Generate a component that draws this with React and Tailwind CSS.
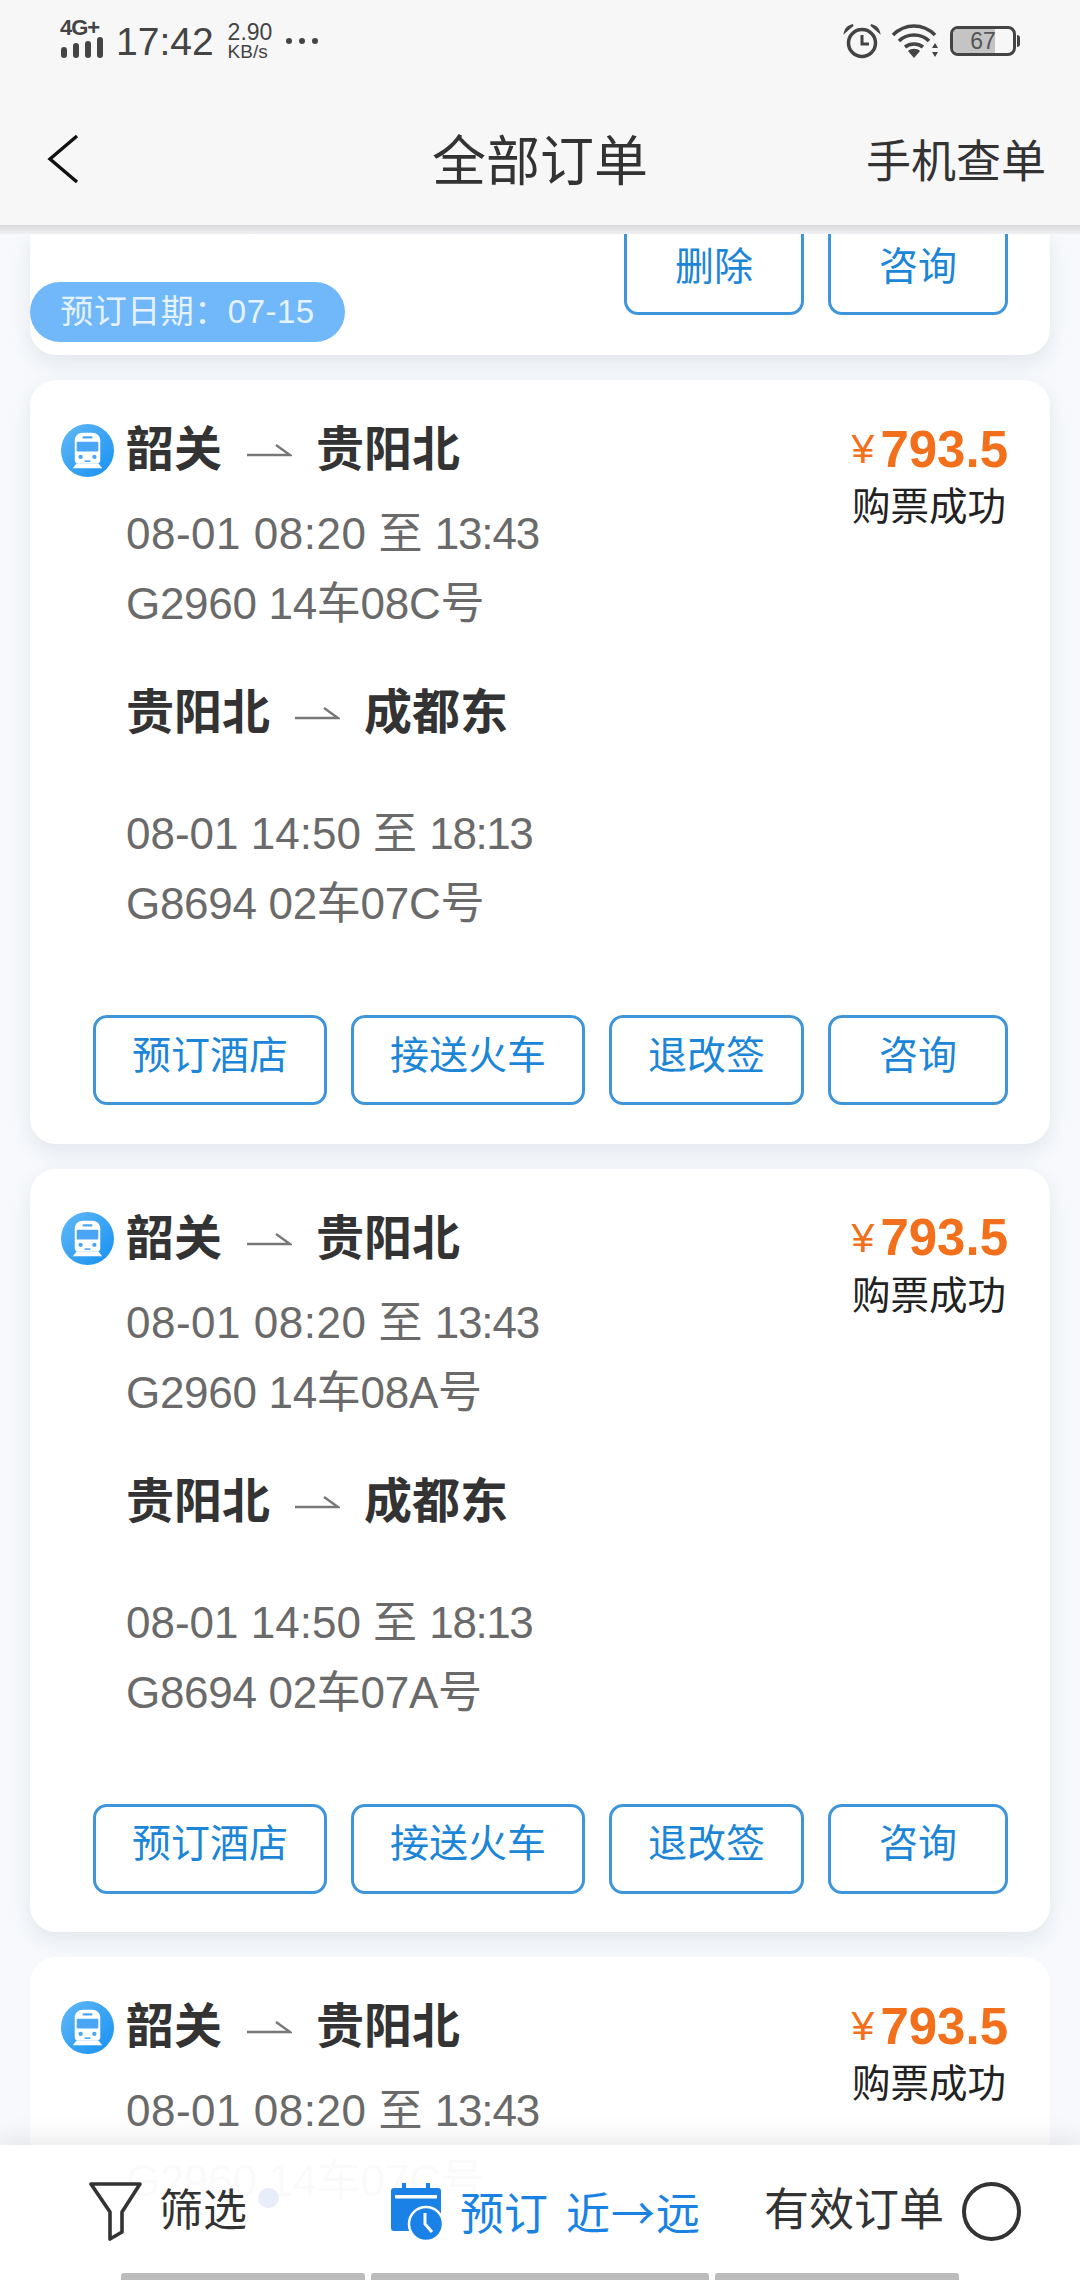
const orders = [
  { seat1: "G2960 14车08C号", seat2: "G8694 02车07C号" },
  { seat1: "G2960 14车08A号", seat2: "G8694 02车07A号" },
];

function TrainIcon() {
  return (
    <svg width="53" height="53" viewBox="0 0 54 54" className="shrink-0">
      <defs>
        <linearGradient id="trainBg" x1="0" y1="0" x2="1" y2="1">
          <stop offset="0" stopColor="#62b9f6" />
          <stop offset="1" stopColor="#1590f2" />
        </linearGradient>
      </defs>
      <circle cx="27" cy="27" r="27" fill="url(#trainBg)" />
      <path d="M14 17c0-5 4-8 8-8h10c4 0 8 3 8 8v20c0 2-1 3-3 3H17c-2 0-3-1-3-3z" fill="#fff" />
      <rect x="16" y="18" width="22" height="10" rx="1" fill="#4aa6f4" />
      <rect x="22" y="12.5" width="10" height="2.4" rx="1" fill="#4aa6f4" />
      <circle cx="20" cy="33.5" r="2.2" fill="#4aa6f4" />
      <circle cx="34" cy="33.5" r="2.2" fill="#4aa6f4" />
      <rect x="24" y="37" width="6" height="1.6" fill="#4aa6f4" />
      <path d="M16 40l-4 5h30l-4-5z" fill="#fff" />
    </svg>
  );
}

function RouteArrow() {
  return (
    <svg width="46" height="16" viewBox="0 0 46 16" className="shrink-0">
      <path d="M1 13h43L30 3" fill="none" stroke="#777" strokeWidth="2.4" />
    </svg>
  );
}

function Route({ from, to }) {
  return (
    <div className="flex items-center h-[60px] text-[48px] font-bold text-[#333]">
      <span>{from}</span>
      <span className="mx-[24px]">
        <RouteArrow />
      </span>
      <span>{to}</span>
    </div>
  );
}

function InfoLine({ className, children }) {
  return <div className={`h-[70px] leading-[70px] text-[44px] text-[#6a6a6a] ${className}`}>{children}</div>;
}

function OutlineButton({ width, children }) {
  return (
    <div
      className={`${width} h-[90px] pb-[8px] flex items-center justify-center rounded-[14px] border-[3px] border-[#3f95da] text-[39px] text-[#1b86d8]`}
    >
      {children}
    </div>
  );
}

function Price() {
  return (
    <div className="flex flex-col items-end">
      <div className="flex items-center h-[60px] text-[#f2701b]">
        <span className="text-[41px] mr-[6px] font-light">¥</span>
        <span className="text-[51px] font-bold">793.5</span>
      </div>
      <div className="text-[38.5px] text-[#222] leading-[50px] mt-[2px] mr-[2px]">购票成功</div>
    </div>
  );
}

function OrderCard({ seat1, seat2 }) {
  return (
    <div className="relative bg-white rounded-[26px] shadow-[0_8px_20px_rgba(190,198,210,0.35)] h-[763.5px] shrink-0">
      <div className="flex justify-between pt-[40px] pl-[31px] pr-[42px]">
        <div className="flex flex-col">
          <div className="flex items-center gap-[12px]">
            <TrainIcon />
            <Route from="韶关" to="贵阳北" />
          </div>
          <div className="pl-[65px] mt-[19px]">
            <InfoLine>
              <span className="tracking-[0.5px]">08-01 08:20</span> 至 <span className="tracking-[-1.2px]">13:43</span>
            </InfoLine>
            <InfoLine className="tracking-[-0.3px]">{seat1}</InfoLine>
            <div className="mt-[44px]">
              <Route from="贵阳北" to="成都东" />
            </div>
            <div className="mt-[56px]">
              <InfoLine>
                08-01 14:50 至 <span className="tracking-[-1.4px]">18:13</span>
              </InfoLine>
              <InfoLine className="tracking-[-0.3px]">{seat2}</InfoLine>
            </div>
          </div>
        </div>
        <Price />
      </div>
      <div className="flex gap-[24px] pl-[63px] mt-[76px]">
        <OutlineButton width="w-[234px]">预订酒店</OutlineButton>
        <OutlineButton width="w-[234px]">接送火车</OutlineButton>
        <OutlineButton width="w-[195px]">退改签</OutlineButton>
        <OutlineButton width="w-[180px]">咨询</OutlineButton>
      </div>
    </div>
  );
}

function StatusBar() {
  return (
    <div className="flex items-center justify-between h-[80px] pt-[2px] pl-[60px] pr-[60px] text-[#444]">
      <div className="flex items-center">
        <div className="flex flex-col w-[44px] -mt-[4px]">
          <span className="text-[22px] leading-[16px] font-bold tracking-[-1px]">4G+</span>
          <svg width="44" height="21" viewBox="0 0 44 21" className="mt-[1px]">
            <rect x="1" y="10" width="6" height="11" rx="3" fill="#444" />
            <rect x="13" y="6" width="6" height="15" rx="3" fill="#444" />
            <rect x="25" y="4" width="6" height="17" rx="3" fill="#444" />
            <rect x="37" y="0" width="6" height="21" rx="3" fill="#444" />
          </svg>
        </div>
        <span className="ml-[12px] text-[39px] leading-none">17:42</span>
        <div className="ml-[14px] flex flex-col items-start">
          <span className="text-[23px] leading-[22px]">2.90</span>
          <span className="text-[19px] leading-[18px]">KB/s</span>
        </div>
        <div className="ml-[14px] flex gap-[7px]">
          <span className="w-[6px] h-[6px] rounded-full bg-[#444]" />
          <span className="w-[6px] h-[6px] rounded-full bg-[#444]" />
          <span className="w-[6px] h-[6px] rounded-full bg-[#444]" />
        </div>
      </div>
      <div className="flex items-center">
        <svg width="38" height="36" viewBox="0 0 38 36">
          <circle cx="19" cy="20" r="13.5" fill="none" stroke="#444" strokeWidth="3.5" />
          <path d="M19 12v9h7" fill="none" stroke="#444" strokeWidth="3" />
          <path d="M2 9c1-4 4-6 8-7zM36 9c-1-4-4-6-8-7z" fill="#444" stroke="#444" strokeWidth="2" />
        </svg>
        <svg width="48" height="36" viewBox="0 0 48 36" className="ml-[10px]">
          <path d="M2 12c12-12 30-12 42 0M8 18c8-8 22-8 30 0M14 24c5-4 13-4 18 0" fill="none" stroke="#444" strokeWidth="3.6" />
          <path d="M23 35l-6-7c3-3 9-3 12 0z" fill="#444" />
          <path d="M44 20l-3 5h6zM44 34l-3-5h6z" fill="#444" />
        </svg>
        <div className="ml-[11px] relative flex items-center justify-center w-[66px] h-[30px] rounded-[8px] border-[3px] border-[#444] overflow-hidden">
          <div className="absolute left-0 top-0 bottom-0 w-[42px] bg-[#c4c4c4]" />
          <span className="relative text-[23px] leading-none text-[#555]">67</span>
        </div>
        <span className="w-[3px] h-[12px] ml-[1px] rounded-r bg-[#444]" />
      </div>
    </div>
  );
}

export default function App() {
  return (
    <div className="relative w-[1080px] h-[2280px] overflow-hidden flex flex-col bg-[#f7f9fc] font-['Liberation_Sans','Noto_Sans_CJK_SC',sans-serif]">
      <div className="bg-[#f7f7f7] h-[225px] shrink-0">
        <StatusBar />
        <div className="relative flex items-center justify-center h-[110px] mt-[25px] pt-[5px]">
          <svg width="34" height="50" viewBox="0 0 34 50" className="absolute left-[46px] top-[29px]">
            <path d="M31 2L4 25l27 23" fill="none" stroke="#111" strokeWidth="3.4" />
          </svg>
          <span className="text-[54px] text-[#333]">全部订单</span>
          <span className="absolute right-[34px] text-[45px] text-[#333]">手机查单</span>
        </div>
      </div>
      <div className="h-[9px] shrink-0 bg-gradient-to-b from-[#d9d9db] to-[#eff0f3]" />

      <div className="flex-1 overflow-hidden flex flex-col gap-[25px] px-[30px]">
        <div className="relative bg-white rounded-b-[26px] shadow-[0_8px_20px_rgba(190,198,210,0.35)] h-[121px] shrink-0">
          <div className="flex justify-end gap-[24px] pr-[42px]">
            <div className="w-[180px] h-[81px] pb-[12px] flex items-center justify-center rounded-b-[14px] border-[3px] border-t-0 border-[#3f95da] text-[39px] text-[#1b86d8]">删除</div>
            <div className="w-[180px] h-[81px] pb-[12px] flex items-center justify-center rounded-b-[14px] border-[3px] border-t-0 border-[#3f95da] text-[39px] text-[#1b86d8]">咨询</div>
          </div>
          <div className="absolute left-0 top-[48px] w-[315px] h-[60px] flex items-center justify-center rounded-full bg-[#70b8f9] text-[33px] tracking-[0.5px] text-[#e6f3ff]">
            预订日期：07-15
          </div>
        </div>

        {orders.map((o) => (
          <OrderCard key={o.seat1} seat1={o.seat1} seat2={o.seat2} />
        ))}

        <div className="relative bg-white rounded-t-[26px] shrink-0 h-[400px] pt-[40px] pl-[31px] pr-[42px]">
          <div className="flex justify-between">
            <div className="flex flex-col">
              <div className="flex items-center gap-[12px]">
                <TrainIcon />
                <Route from="韶关" to="贵阳北" />
              </div>
              <div className="pl-[65px] mt-[19px]">
                <InfoLine>
                  <span className="tracking-[0.5px]">08-01 08:20</span> 至 <span className="tracking-[-1.2px]">13:43</span>
                </InfoLine>
                <InfoLine className="tracking-[-0.3px]">G2960 14车07C号</InfoLine>
              </div>
            </div>
            <Price />
          </div>
        </div>
      </div>

      {/* bottom filter bar sits over the list, a little of the card shows through */}
      <div className="absolute left-0 right-0 bottom-0 h-[135px] bg-white/[0.97] shadow-[0_-8px_20px_rgba(190,190,195,0.3)]">
        <span className="absolute left-[258px] top-[43px] w-[21px] h-[20px] rounded-full bg-[#e8eef7]" />
        <div className="relative flex items-center h-[130px] pl-[88px] pr-[59px] pt-[2px] text-[44px] text-[#333]">
          <svg width="55" height="60" viewBox="0 0 55 60" className="shrink-0">
            <path d="M3 3h49L34 31v20l-12 7V31z" fill="none" stroke="#333" strokeWidth="3.6" strokeLinejoin="round" />
          </svg>
          <span className="ml-[16px]">筛选</span>
          <svg width="52" height="58" viewBox="0 0 52 58" className="shrink-0 ml-[143px]">
            <path d="M4 6h8V1h4v5h20V1h4v5h8a3 3 0 0 1 3 3v37a3 3 0 0 1-3 3H4a3 3 0 0 1-3-3V9a3 3 0 0 1 3-3z" fill="#1a82e6" />
            <rect x="5" y="13" width="42" height="3.5" fill="#fff" />
            <circle cx="36" cy="42" r="17" fill="#1a82e6" stroke="#fff" strokeWidth="2.5" />
            <path d="M35 31v11l7 8" fill="none" stroke="#fff" strokeWidth="3" />
          </svg>
          <div className="ml-[18px] flex gap-[18px] text-[#1a82e2] font-['Noto_Sans_CJK_SC',sans-serif]">
            <span>预订</span>
            <span className="tracking-[1px]">近→远</span>
          </div>
          <span className="ml-auto text-[45px]">有效订单</span>
          <span className="ml-[18px] w-[59px] h-[59px] rounded-full border-[4px] border-[#333] shrink-0" />
        </div>
      </div>
      <div className="absolute left-[121px] bottom-0 flex gap-[6px] h-[7px]">
        <span className="w-[244px] rounded-t-[3px] bg-[#bcbcbc]" />
        <span className="w-[338px] rounded-t-[3px] bg-[#bcbcbc]" />
        <span className="w-[244px] rounded-t-[3px] bg-[#bcbcbc]" />
      </div>
    </div>
  );
}
